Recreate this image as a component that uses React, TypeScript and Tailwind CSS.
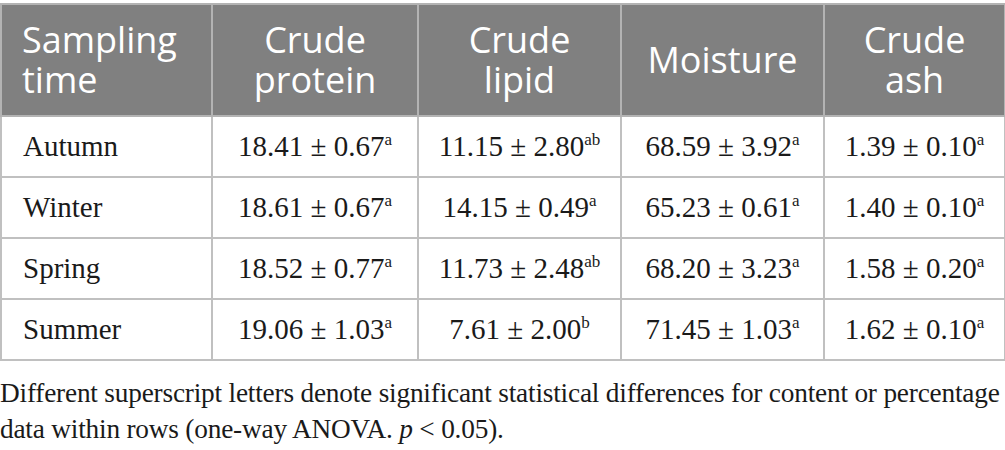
const headers = [
  { label: ["Sampling", "time"], align: "left" },
  { label: ["Crude", "protein"], align: "center" },
  { label: ["Crude", "lipid"], align: "center" },
  { label: ["Moisture"], align: "center" },
  { label: ["Crude", "ash"], align: "center" },
];

type Cell = [string, string];

const rows: { season: string; values: Cell[] }[] = [
  {
    season: "Autumn",
    values: [["18.41 ± 0.67", "a"], ["11.15 ± 2.80", "ab"], ["68.59 ± 3.92", "a"], ["1.39 ± 0.10", "a"]],
  },
  {
    season: "Winter",
    values: [["18.61 ± 0.67", "a"], ["14.15 ± 0.49", "a"], ["65.23 ± 0.61", "a"], ["1.40 ± 0.10", "a"]],
  },
  {
    season: "Spring",
    values: [["18.52 ± 0.77", "a"], ["11.73 ± 2.48", "ab"], ["68.20 ± 3.23", "a"], ["1.58 ± 0.20", "a"]],
  },
  {
    season: "Summer",
    values: [["19.06 ± 1.03", "a"], ["7.61 ± 2.00", "b"], ["71.45 ± 1.03", "a"], ["1.62 ± 0.10", "a"]],
  },
];

const widths = ["w-[211px]", "w-[206px]", "w-[203px]", "w-[203px]", "w-[181px]"];

export default function App() {
  return (
    <div className="w-[1005px] h-[450px] bg-white pt-[3px] overflow-hidden">
      <table className="border-collapse table-fixed w-[1004px]">
        <thead>
          <tr className="h-[112px] bg-[#808080] text-white font-['Open_Sans',sans-serif] text-[36px] leading-[40px]">
            {headers.map((h, i) => (
              <th
                key={i}
                className={`${widths[i]} border-2 border-[#b3b3b3] font-normal align-middle ${
                  h.align === "left" ? "text-left pl-[20px]" : "text-center"
                }`}
              >
                {h.label.map((l) => (
                  <div key={l}>{l}</div>
                ))}
              </th>
            ))}
          </tr>
        </thead>
        <tbody className="font-['Liberation_Serif',serif] text-[29px] text-[#1a1a1a]">
          {rows.map((r) => (
            <tr key={r.season} className="h-[61px]">
              <td className="border-2 border-[#c0c0c0] pl-[21px]">{r.season}</td>
              {r.values.map(([v, s], i) => (
                <td key={i} className="border-2 border-[#c0c0c0] text-center whitespace-nowrap">
                  {v}
                  <sup className="text-[17px] relative -top-[11px]">{s}</sup>
                </td>
              ))}
            </tr>
          ))}
        </tbody>
      </table>
      <p className="mt-[14px] font-['Liberation_Serif',serif] text-[27.3px] leading-[36px] tracking-[-0.2px] text-[#1a1a1a] whitespace-nowrap">
        Different superscript letters denote significant statistical differences for content or percentage
        <br />
        data within rows (one-way ANOVA. <i>p</i> &lt; 0.05).
      </p>
    </div>
  );
}
